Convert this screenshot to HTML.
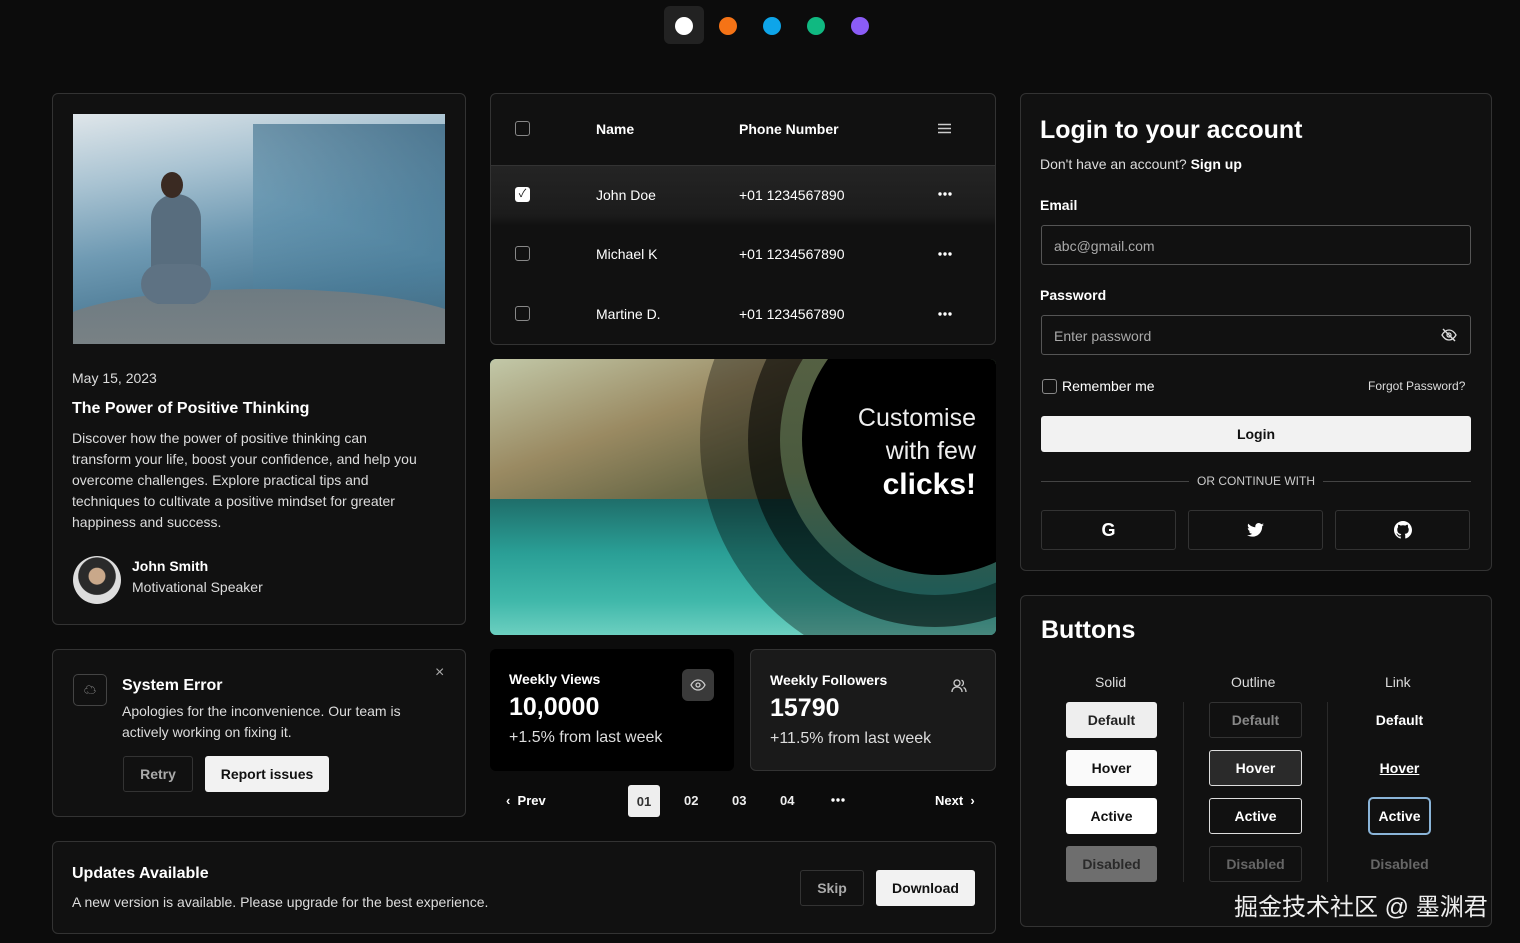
<!DOCTYPE html>
<html><head><meta charset="utf-8"><style>
*{box-sizing:border-box;margin:0;padding:0}
body{width:1520px;height:943px;background:#0c0c0c;font-family:"Liberation Sans","Noto Sans CJK SC",sans-serif;color:#eee;position:relative;overflow:hidden}
.a{position:absolute}
.card{position:absolute;background:#111;border:1px solid #333;border-radius:6px}
.dot{position:absolute;width:18px;height:18px;border-radius:50%;top:17px}
.btn{position:absolute;border-radius:3px;font-size:14px;font-weight:bold;display:flex;align-items:center;justify-content:center}
.cb{position:absolute;width:15px;height:15px;border:1.5px solid #888;border-radius:3px}
.t{position:absolute;font-size:14px;white-space:nowrap}
.in{position:absolute;border:1px solid #555;border-radius:3px;height:40px;font-size:14px;color:#aaa;padding:12px}
</style></head><body>
<div class="a" style="left:664px;top:6px;width:40px;height:38px;background:#222;border-radius:6px"></div>
<div class="dot" style="left:675px;background:#fff"></div>
<div class="dot" style="left:719px;background:#f57316"></div>
<div class="dot" style="left:763px;background:#0ea5e9"></div>
<div class="dot" style="left:807px;background:#10b981"></div>
<div class="dot" style="left:851px;background:#8b5cf6"></div>

<!-- blog card -->
<div class="card" style="left:52px;top:93px;width:414px;height:532px"></div>
<div class="a" style="left:73px;top:114px;width:372px;height:230px;overflow:hidden;background:linear-gradient(170deg,#dfe6ea 0%,#a9c3d2 25%,#6f9ab3 50%,#4a7893 75%,#3d5a6c 100%)">
<div class="a" style="left:180px;top:10px;width:200px;height:210px;background:linear-gradient(200deg,rgba(53,98,126,0.8),rgba(79,134,163,0.5) 50%,rgba(80,130,160,0))"></div>
<div class="a" style="left:-20px;top:175px;width:420px;height:80px;background:linear-gradient(180deg,#6e7b82,#7d8486);border-radius:50% 50% 0 0"></div>
<div class="a" style="left:78px;top:80px;width:50px;height:110px;background:#586d7e;border-radius:25px 25px 8px 8px"></div>
<div class="a" style="left:68px;top:150px;width:70px;height:40px;background:#5e7283;border-radius:20px"></div>
<div class="a" style="left:88px;top:58px;width:22px;height:26px;background:#3a2a22;border-radius:50%"></div>
</div>
<div class="t" style="left:72px;top:370px;color:#ddd">May 15, 2023</div>
<div class="t" style="left:72px;top:400px;font-size:16px;font-weight:bold;color:#fff">The Power of Positive Thinking</div>
<div class="a" style="left:72px;top:428px;font-size:14px;line-height:21px;color:#ddd;white-space:nowrap">Discover how the power of positive thinking can<br>transform your life, boost your confidence, and help you<br>overcome challenges. Explore practical tips and<br>techniques to cultivate a positive mindset for greater<br>happiness and success.</div>
<div class="a" style="left:73px;top:556px;width:48px;height:48px;border-radius:50%;background:radial-gradient(circle at 50% 42%,#c9a88a 0 22%,#2a2a2a 24% 50%,#ddd 52%)"></div>
<div class="t" style="left:132px;top:558px;font-weight:bold;color:#fff">John Smith</div>
<div class="t" style="left:132px;top:579px;color:#ddd">Motivational Speaker</div>

<!-- error -->
<div class="card" style="left:52px;top:649px;width:414px;height:168px"></div>
<div class="a" style="left:73px;top:674px;width:34px;height:32px;border:1px solid #444;border-radius:5px;color:#aaa;font-size:12px;text-align:center;line-height:30px">☁</div>
<div class="t" style="left:122px;top:677px;font-size:16px;font-weight:bold;color:#fff">System Error</div>
<div class="a" style="left:122px;top:701px;width:310px;font-size:14px;line-height:21px;color:#ddd">Apologies for the inconvenience. Our team is actively working on fixing it.</div>
<div class="t" style="left:435px;top:664px;font-size:16px;color:#aaa">×</div>
<div class="btn" style="left:123px;top:756px;width:70px;height:36px;border:1px solid #333;color:#aaa">Retry</div>
<div class="btn" style="left:205px;top:756px;width:124px;height:36px;background:#f2f2f2;color:#111">Report issues</div>

<!-- updates -->
<div class="card" style="left:52px;top:841px;width:944px;height:93px"></div>
<div class="t" style="left:72px;top:865px;font-size:16px;font-weight:bold;color:#fff">Updates Available</div>
<div class="t" style="left:72px;top:894px;color:#ddd">A new version is available. Please upgrade for the best experience.</div>
<div class="btn" style="left:800px;top:870px;width:64px;height:36px;border:1px solid #333;color:#aaa">Skip</div>
<div class="btn" style="left:876px;top:870px;width:99px;height:36px;background:#f2f2f2;color:#111">Download</div>

<!-- table -->
<div class="card" style="left:490px;top:93px;width:506px;height:252px;overflow:hidden">
<div class="a" style="left:0;top:71px;width:506px;height:1px;background:#333"></div>
<div class="a" style="left:0;top:72px;width:506px;height:60px;background:linear-gradient(#242424,#1c1c1c 80%,#111)"></div>
</div>
<div class="cb" style="left:515px;top:121px"></div>
<div class="t" style="left:596px;top:121px;font-weight:bold;color:#fff">Name</div>
<div class="t" style="left:739px;top:121px;font-weight:bold;color:#fff">Phone Number</div>
<svg class="a" style="left:938px;top:123px" width="13" height="11"><path d="M0 1.5h13M0 5.5h13M0 9.5h13" stroke="#ccc" stroke-width="1.6"/></svg>
<div class="a" style="left:515px;top:187px;width:15px;height:15px;background:#fff;border-radius:3px;color:#111;font-size:11px;text-align:center;line-height:15px">✓</div>
<div class="t" style="left:596px;top:187px;color:#fff">John Doe</div><div class="t" style="left:739px;top:187px;color:#fff">+01 1234567890</div>
<div class="t" style="left:596px;top:246px;color:#fff">Michael K</div><div class="t" style="left:739px;top:246px;color:#fff">+01 1234567890</div>
<div class="t" style="left:596px;top:306px;color:#fff">Martine D.</div><div class="t" style="left:739px;top:306px;color:#fff">+01 1234567890</div>
<div class="cb" style="left:515px;top:246px"></div>
<div class="cb" style="left:515px;top:306px"></div>
<svg class="a" style="left:938px;top:192px" width="14" height="4"><circle cx="2" cy="2" r="1.7" fill="#fff"/><circle cx="7" cy="2" r="1.7" fill="#fff"/><circle cx="12" cy="2" r="1.7" fill="#fff"/></svg>
<svg class="a" style="left:938px;top:252px" width="14" height="4"><circle cx="2" cy="2" r="1.7" fill="#fff"/><circle cx="7" cy="2" r="1.7" fill="#fff"/><circle cx="12" cy="2" r="1.7" fill="#fff"/></svg>
<svg class="a" style="left:938px;top:312px" width="14" height="4"><circle cx="2" cy="2" r="1.7" fill="#fff"/><circle cx="7" cy="2" r="1.7" fill="#fff"/><circle cx="12" cy="2" r="1.7" fill="#fff"/></svg>

<!-- image promo -->
<div class="a" style="left:490px;top:359px;width:506px;height:276px;border-radius:6px;overflow:hidden;background:#2a9a92">
<div class="a" style="left:0;top:0;width:506px;height:150px;background:linear-gradient(160deg,#c2c8a8,#9a8a62 35%,#6b6a48 60%,#3f5a3e 90%)"></div>
<div class="a" style="left:0;top:140px;width:506px;height:136px;background:linear-gradient(180deg,#1f6e6a,#2a9f96 40%,#40b8aa 75%,#6ccfc0)"></div>
<div class="a" style="left:210px;top:-154px;width:470px;height:470px;border-radius:50%;background:rgba(0,0,0,0.35)"></div>
<div class="a" style="left:258px;top:-106px;width:374px;height:374px;border-radius:50%;background:rgba(0,0,0,0.55)"></div>
<div class="a" style="left:290px;top:-74px;width:310px;height:310px;border-radius:50%;background:linear-gradient(180deg,#5c6446,#4a5a3e 60%,#1f5a56)"></div>
<div class="a" style="left:312px;top:-56px;width:272px;height:272px;border-radius:50%;background:#000"></div>
</div>
<div class="a" style="left:820px;top:402px;width:156px;text-align:right;font-size:25px;line-height:33px;color:#eee">Customise<br>with few<br><b style="font-size:30px;color:#fff">clicks!</b></div>

<!-- stats -->
<div class="a" style="left:490px;top:649px;width:244px;height:122px;background:#000;border-radius:6px"></div>
<div class="t" style="left:509px;top:671px;font-weight:bold;color:#fff">Weekly Views</div>
<div class="t" style="left:509px;top:693px;font-size:25px;font-weight:bold;color:#fff">10,0000</div>
<div class="t" style="left:509px;top:729px;font-size:16px;color:#ddd">+1.5% from last week</div>
<div class="a" style="left:682px;top:669px;width:32px;height:32px;background:#3a3a3a;border-radius:6px"></div>
<svg class="a" style="left:690px;top:678px" width="16" height="14" viewBox="0 0 16 14"><path d="M1 7C3 3 5.5 2 8 2s5 1 7 5c-2 4-4.5 5-7 5S3 11 1 7z" fill="none" stroke="#ccc" stroke-width="1.3"/><circle cx="8" cy="7" r="2" fill="none" stroke="#ccc" stroke-width="1.3"/></svg>
<div class="card" style="left:750px;top:649px;width:246px;height:122px;background:#1a1a1a"></div>
<div class="t" style="left:770px;top:672px;font-weight:bold;color:#fff">Weekly Followers</div>
<div class="t" style="left:770px;top:694px;font-size:25px;font-weight:bold;color:#fff">15790</div>
<div class="t" style="left:770px;top:730px;font-size:16px;color:#ddd">+11.5% from last week</div>
<svg class="a" style="left:951px;top:678px" width="16" height="15" viewBox="0 0 16 15"><circle cx="6" cy="5" r="3" fill="none" stroke="#ccc" stroke-width="1.3"/><path d="M1 14c0-3 2-5 5-5s5 2 5 5M10.5 2.2a3 3 0 010 5.6M12.5 9.5c1.5.6 2.5 2.2 2.5 4.5" fill="none" stroke="#ccc" stroke-width="1.3"/></svg>

<!-- pagination -->
<div class="t" style="left:506px;top:793px;font-size:13px;font-weight:bold;color:#fff">‹&nbsp; Prev</div>
<div class="btn" style="left:628px;top:785px;width:32px;height:32px;background:#eee;color:#333;font-size:13px">01</div>
<div class="t" style="left:684px;top:793px;font-size:13px;font-weight:bold">02</div>
<div class="t" style="left:732px;top:793px;font-size:13px;font-weight:bold">03</div>
<div class="t" style="left:780px;top:793px;font-size:13px;font-weight:bold">04</div>
<svg class="a" style="left:831px;top:798px" width="14" height="4"><circle cx="2" cy="2" r="1.7" fill="#fff"/><circle cx="7" cy="2" r="1.7" fill="#fff"/><circle cx="12" cy="2" r="1.7" fill="#fff"/></svg>
<div class="t" style="left:935px;top:793px;font-size:13px;font-weight:bold;color:#fff">Next &nbsp;›</div>

<!-- login -->
<div class="card" style="left:1020px;top:93px;width:472px;height:478px"></div>
<div class="t" style="left:1040px;top:116px;font-size:25px;font-weight:bold;color:#fff">Login to your account</div>
<div class="t" style="left:1040px;top:156px;color:#ddd">Don't have an account? <b style="color:#fff">Sign up</b></div>
<div class="t" style="left:1040px;top:197px;font-weight:bold;color:#fff">Email</div>
<div class="in" style="left:1041px;top:225px;width:430px">abc@gmail.com</div>
<div class="t" style="left:1040px;top:287px;font-weight:bold;color:#fff">Password</div>
<div class="in" style="left:1041px;top:315px;width:430px">Enter password</div>
<svg class="a" style="left:1441px;top:327px" width="16" height="16" viewBox="0 0 16 16"><path d="M1 8c2-3.5 4.5-5 7-5s5 1.5 7 5c-2 3.5-4.5 5-7 5S3 11.5 1 8z" fill="none" stroke="#ddd" stroke-width="1.3"/><circle cx="8" cy="8" r="2" fill="none" stroke="#ddd" stroke-width="1.3"/><path d="M2 2l12 12" stroke="#ddd" stroke-width="1.4"/></svg>
<div class="cb" style="left:1042px;top:379px"></div>
<div class="t" style="left:1062px;top:378px;color:#fff">Remember me</div>
<div class="t" style="left:1368px;top:379px;font-size:12px;color:#ddd">Forgot Password?</div>
<div class="btn" style="left:1041px;top:416px;width:430px;height:36px;background:#f2f2f2;color:#111">Login</div>
<div class="a" style="left:1041px;top:481px;width:148px;height:1px;background:#444"></div>
<div class="a" style="left:1323px;top:481px;width:148px;height:1px;background:#444"></div>
<div class="t" style="left:1197px;top:474px;font-size:12px;color:#ccc">OR CONTINUE WITH</div>
<div class="btn" style="left:1041px;top:510px;width:135px;height:40px;border:1px solid #333;color:#fff;font-size:18px">G</div>
<div class="btn" style="left:1188px;top:510px;width:135px;height:40px;border:1px solid #333"><svg width="17" height="14" viewBox="0 0 24 20"><path fill="#fff" d="M24 2.4c-.9.4-1.8.7-2.8.8 1-.6 1.8-1.6 2.2-2.7-1 .6-2 1-3.1 1.2C19.3.7 18 0 16.6 0c-2.7 0-4.900 2.2-4.900 4.900 0 .4 0 .8.1 1.100C7.7 5.8 4.1 3.9 1.7.9c-.4.7-.7 1.6-.7 2.5 0 1.7.9 3.2 2.2 4.1-.8 0-1.6-.2-2.2-.6v.1c0 2.4 1.7 4.4 3.9 4.8-.4.1-.8.2-1.3.2-.3 0-.6 0-.9-.1.6 2 2.4 3.4 4.6 3.4-1.7 1.3-3.8 2.1-6.1 2.1-.4 0-.8 0-1.2-.1 2.2 1.4 4.8 2.2 7.5 2.2 9.1 0 14-7.5 14-14v-.6c1-.7 1.8-1.6 2.5-2.5z"/></svg></div>
<div class="btn" style="left:1335px;top:510px;width:135px;height:40px;border:1px solid #333;color:#fff"><svg width="18" height="18" viewBox="0 0 16 16"><path fill="#fff" d="M8 0C3.6 0 0 3.6 0 8c0 3.5 2.3 6.5 5.5 7.6.4.1.5-.2.5-.4v-1.4c-2.2.5-2.7-1-2.7-1-.4-.9-.9-1.2-.9-1.2-.7-.5.1-.5.1-.5.8.1 1.2.8 1.2.8.7 1.3 1.9.9 2.3.7.1-.5.3-.9.5-1.1-1.8-.2-3.6-.9-3.6-4 0-.9.3-1.6.8-2.1-.1-.2-.4-1 .1-2.1 0 0 .7-.2 2.2.8.6-.2 1.3-.3 2-.3s1.4.1 2 .3c1.5-1 2.2-.8 2.2-.8.4 1.1.2 1.9.1 2.1.5.6.8 1.3.8 2.1 0 3.1-1.9 3.7-3.6 3.9.3.3.5.8.5 1.5v2.2c0 .2.1.5.6.4C13.7 14.5 16 11.5 16 8c0-4.4-3.6-8-8-8z"/></svg></div>

<!-- buttons -->
<div class="card" style="left:1020px;top:595px;width:472px;height:332px"></div>
<div class="t" style="left:1041px;top:616px;font-size:25px;font-weight:bold;color:#fff">Buttons</div>
<div class="t" style="left:1095px;top:674px;color:#ddd">Solid</div>
<div class="t" style="left:1231px;top:674px;color:#ddd">Outline</div>
<div class="t" style="left:1385px;top:674px;color:#ddd">Link</div>
<div class="a" style="left:1183px;top:702px;width:1px;height:180px;background:#2a2a2a"></div>
<div class="a" style="left:1327px;top:702px;width:1px;height:180px;background:#2a2a2a"></div>
<div class="btn" style="left:1066px;top:702px;width:91px;height:36px;background:#eee;color:#222">Default</div>
<div class="btn" style="left:1066px;top:750px;width:91px;height:36px;background:#fafafa;color:#111">Hover</div>
<div class="btn" style="left:1066px;top:798px;width:91px;height:36px;background:#fff;color:#111">Active</div>
<div class="btn" style="left:1066px;top:846px;width:91px;height:36px;background:#6e6e6e;color:#2a2a2a">Disabled</div>
<div class="btn" style="left:1209px;top:702px;width:93px;height:36px;border:1px solid #333;color:#888">Default</div>
<div class="btn" style="left:1209px;top:750px;width:93px;height:36px;border:1px solid #ddd;background:#2a2a2a;color:#fff">Hover</div>
<div class="btn" style="left:1209px;top:798px;width:93px;height:36px;border:1px solid #ddd;color:#fff">Active</div>
<div class="btn" style="left:1209px;top:846px;width:93px;height:36px;border:1px solid #333;color:#666">Disabled</div>
<div class="btn" style="left:1368px;top:702px;width:63px;height:36px;color:#fff">Default</div>
<div class="btn" style="left:1368px;top:750px;width:63px;height:36px;color:#fff;text-decoration:underline">Hover</div>
<div class="btn" style="left:1368px;top:797px;width:63px;height:38px;border:2px solid #8ab4d8;border-radius:5px;color:#fff">Active</div>
<div class="btn" style="left:1368px;top:846px;width:63px;height:36px;color:#666">Disabled</div>
<div class="t" style="left:1234px;top:887px;font-size:24px;color:#eee">掘金技术社区 @ 墨渊君</div>
</body></html>
